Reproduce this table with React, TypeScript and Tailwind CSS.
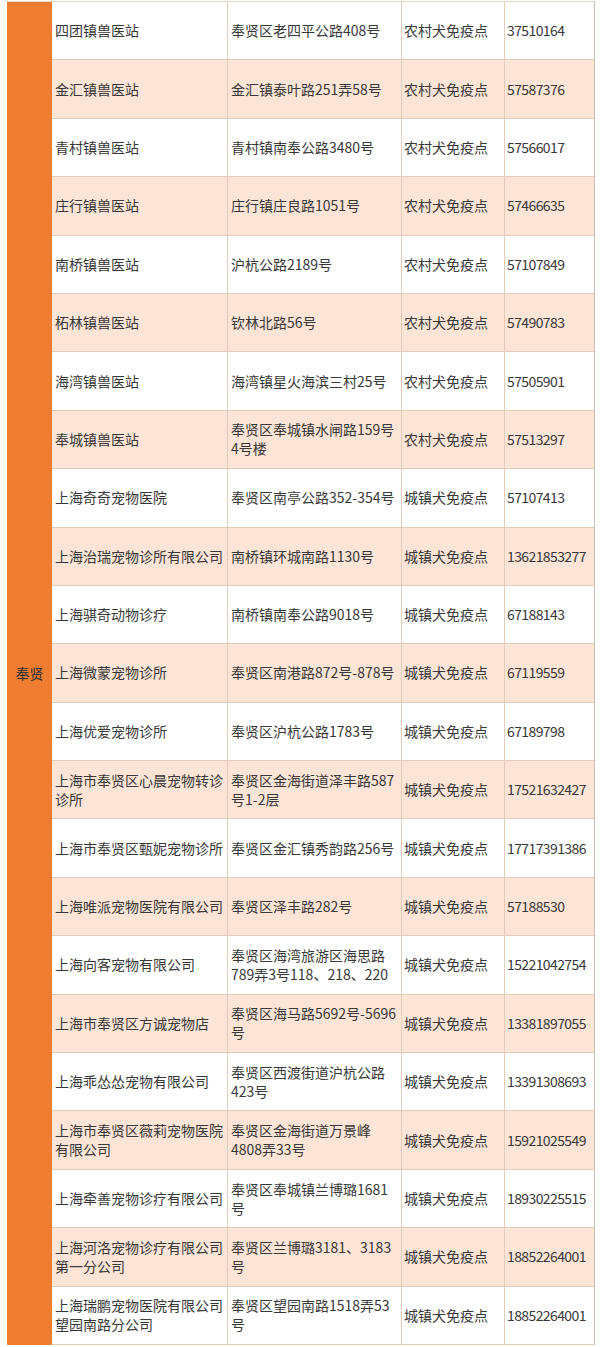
type Row = {
  name: string[]
  addr: string[]
  kind: string
  phone: string
}

const rows: Row[] = [
  { name: ["四团镇兽医站"], addr: ["奉贤区老四平公路408号"], kind: "农村犬免疫点", phone: "37510164" },
  { name: ["金汇镇兽医站"], addr: ["金汇镇泰叶路251弄58号"], kind: "农村犬免疫点", phone: "57587376" },
  { name: ["青村镇兽医站"], addr: ["青村镇南奉公路3480号"], kind: "农村犬免疫点", phone: "57566017" },
  { name: ["庄行镇兽医站"], addr: ["庄行镇庄良路1051号"], kind: "农村犬免疫点", phone: "57466635" },
  { name: ["南桥镇兽医站"], addr: ["沪杭公路2189号"], kind: "农村犬免疫点", phone: "57107849" },
  { name: ["柘林镇兽医站"], addr: ["钦林北路56号"], kind: "农村犬免疫点", phone: "57490783" },
  { name: ["海湾镇兽医站"], addr: ["海湾镇星火海滨三村25号"], kind: "农村犬免疫点", phone: "57505901" },
  { name: ["奉城镇兽医站"], addr: ["奉贤区奉城镇水闸路159号", "4号楼"], kind: "农村犬免疫点", phone: "57513297" },
  { name: ["上海奇奇宠物医院"], addr: ["奉贤区南亭公路352-354号"], kind: "城镇犬免疫点", phone: "57107413" },
  { name: ["上海治瑞宠物诊所有限公司"], addr: ["南桥镇环城南路1130号"], kind: "城镇犬免疫点", phone: "13621853277" },
  { name: ["上海骐奇动物诊疗"], addr: ["南桥镇南奉公路9018号"], kind: "城镇犬免疫点", phone: "67188143" },
  { name: ["上海微蒙宠物诊所"], addr: ["奉贤区南港路872号-878号"], kind: "城镇犬免疫点", phone: "67119559" },
  { name: ["上海优爱宠物诊所"], addr: ["奉贤区沪杭公路1783号"], kind: "城镇犬免疫点", phone: "67189798" },
  { name: ["上海市奉贤区心晨宠物转诊", "诊所"], addr: ["奉贤区金海街道泽丰路587", "号1-2层"], kind: "城镇犬免疫点", phone: "17521632427" },
  { name: ["上海市奉贤区甄妮宠物诊所"], addr: ["奉贤区金汇镇秀韵路256号"], kind: "城镇犬免疫点", phone: "17717391386" },
  { name: ["上海唯派宠物医院有限公司"], addr: ["奉贤区泽丰路282号"], kind: "城镇犬免疫点", phone: "57188530" },
  { name: ["上海向客宠物有限公司"], addr: ["奉贤区海湾旅游区海思路", "789弄3号118、218、220"], kind: "城镇犬免疫点", phone: "15221042754" },
  { name: ["上海市奉贤区方诚宠物店"], addr: ["奉贤区海马路5692号-5696", "号"], kind: "城镇犬免疫点", phone: "13381897055" },
  { name: ["上海乖怂怂宠物有限公司"], addr: ["奉贤区西渡街道沪杭公路", "423号"], kind: "城镇犬免疫点", phone: "13391308693" },
  { name: ["上海市奉贤区薇莉宠物医院", "有限公司"], addr: ["奉贤区金海街道万景峰", "4808弄33号"], kind: "城镇犬免疫点", phone: "15921025549" },
  { name: ["上海牵善宠物诊疗有限公司"], addr: ["奉贤区奉城镇兰博璐1681", "号"], kind: "城镇犬免疫点", phone: "18930225515" },
  { name: ["上海河洛宠物诊疗有限公司", "第一分公司"], addr: ["奉贤区兰博璐3181、3183", "号"], kind: "城镇犬免疫点", phone: "18852264001" },
  { name: ["上海瑞鹏宠物医院有限公司", "望园南路分公司"], addr: ["奉贤区望园南路1518弄53", "号"], kind: "城镇犬免疫点", phone: "18852264001" },
]

function Lines({ lines }: { lines: string[] }) {
  return (
    <div className="flex flex-col leading-[19px]">
      {lines.map((l, i) => (
        <span key={i} className="whitespace-nowrap">
          {l}
        </span>
      ))}
    </div>
  )
}

export default function App() {
  return (
    <div
      className="w-[600px] h-[1347px] bg-white pt-[1px] pl-[7px] text-[14px] text-[#383838]"
      style={{ fontFamily: '"Noto Sans CJK SC", "Noto Sans", sans-serif' }}
    >
      <div className="flex w-[588px] border-t border-[#e6d3c2]">
        {/* district column */}
        <div className="w-[45px] shrink-0 bg-[#ee7d31] flex items-center justify-center">
          <span className="whitespace-nowrap text-[#2e2e2e]">奉贤</span>
        </div>

        {/* data rows */}
        <div className="flex flex-col border-r border-[#cdbdae]">
          {rows.map((r, i) => (
            <div
              key={i}
              className={`flex h-[58.4px] border-b border-[#e3cdb9] ${i % 2 === 1 ? "bg-[#fce4d6]" : "bg-white"}`}
            >
              <div className="w-[176px] pl-[3px] flex items-center border-r border-[#e3cdb9]">
                <Lines lines={r.name} />
              </div>
              <div className="w-[174px] pl-[3px] flex items-center border-r border-[#e3cdb9]">
                <Lines lines={r.addr} />
              </div>
              <div className="w-[103px] pl-[2px] flex items-center border-r border-[#e3cdb9]">
                <span className="whitespace-nowrap">{r.kind}</span>
              </div>
              <div className="w-[89px] pl-[2px] flex items-center">
                <span className="whitespace-nowrap tracking-[-0.6px]">{r.phone}</span>
              </div>
            </div>
          ))}
        </div>
      </div>
    </div>
  )
}
